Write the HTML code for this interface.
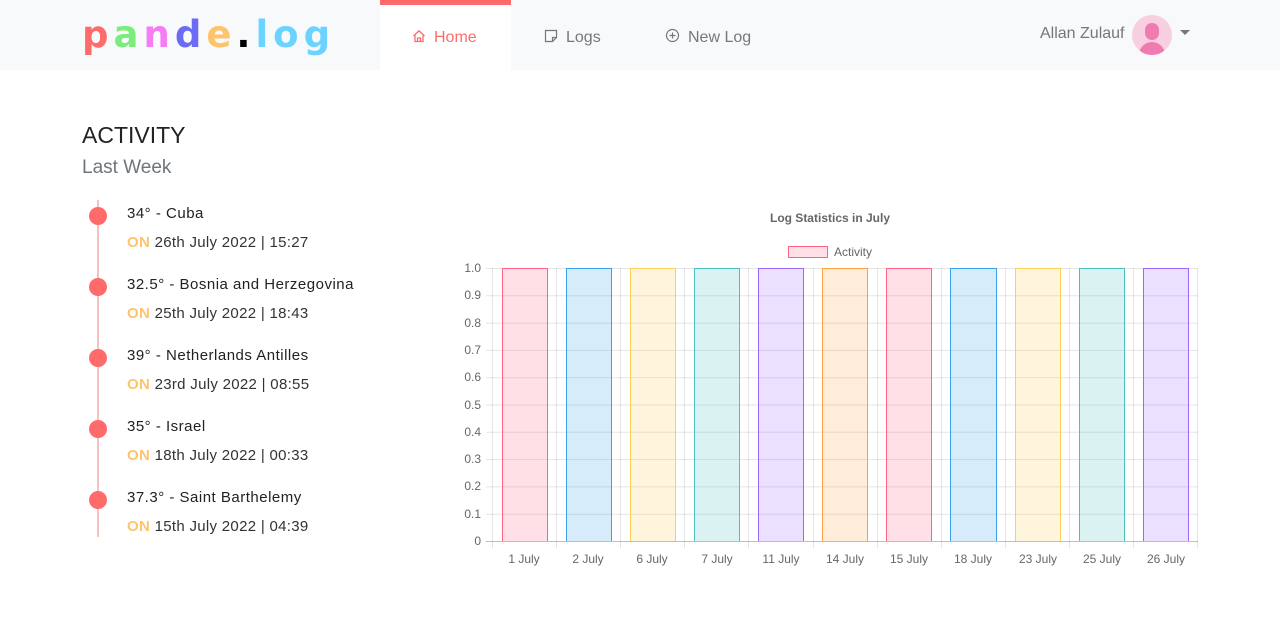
<!DOCTYPE html>
<html><head><meta charset="utf-8"><style>
*{margin:0;padding:0;box-sizing:border-box}
body{width:1280px;height:618px;background:#fff;font-family:"Liberation Sans",sans-serif;position:relative;overflow:hidden}
.nav{position:absolute;left:0;top:0;width:1280px;height:70px;background:#f8f9fb}
.logo{position:absolute;left:82px;top:13px;font-family:"DejaVu Sans",sans-serif;font-weight:bold;font-size:37px;letter-spacing:5px}
.tab{position:absolute;top:0;height:70px;font-size:16px;color:#777;line-height:76px}
.home{left:380px;width:131px;background:#fff;border-top:5px solid #ff6b6b;color:#ff6b6b;line-height:66px;padding-left:32px}
.user{position:absolute;left:1040px;top:25px;font-size:16px;color:#777}
.av{position:absolute;left:1132px;top:15px;width:40px;height:40px;border-radius:50%;background:#f8cfe0;overflow:hidden}
.h1{position:absolute;left:82px;top:122px;font-size:23px;color:#222}
.h2{position:absolute;left:82px;top:157px;font-size:19px;color:#6c757d}
.line{position:absolute;left:97px;top:200px;width:2px;height:337px;background:#f4c0c0}
.dot{position:absolute;left:89px;width:18px;height:18px;border-radius:50%;background:#ff6b6b}
.t{position:absolute;left:127px;font-size:15px;color:#222;letter-spacing:.5px}
.d{position:absolute;left:127px;font-size:15px;color:#333;letter-spacing:.3px}
.d b{color:#ffc46b}
</style></head><body>
<div class="nav">
<div class="logo"><span style="color:#ff6b6b">p</span><span style="color:#7bed7b">a</span><span style="color:#f57cf5">n</span><span style="color:#6b6bf5">d</span><span style="color:#ffc46b">e</span><span style="color:#000">.</span><span style="color:#6bd3ff">log</span></div>
<div class="tab home"><svg width="14" height="14" viewBox="0 0 14 14" style="vertical-align:-1px;margin-right:8px"><path d="M1.5 7L7 1.8 12.5 7M3 5.8V12.5H11V5.8M5.5 12.5V9H8.5V12.5" fill="none" stroke="#ff6b6b" stroke-width="1.3"/></svg>Home</div>
<div class="tab" style="left:544px"><svg width="14" height="14" viewBox="0 0 14 14" style="vertical-align:-1px;margin-right:8px"><path d="M1.5 1.5H12.5V8.5L8.5 12.5H1.5ZM12.5 8.5H8.5V12.5" fill="none" stroke="#777" stroke-width="1.2"/></svg>Logs</div>
<div class="tab" style="left:665px"><svg width="15" height="15" viewBox="0 0 15 15" style="vertical-align:-1px;margin-right:8px"><circle cx="7.5" cy="7.5" r="6" fill="none" stroke="#777" stroke-width="1.2"/><path d="M7.5 4.5V10.5M4.5 7.5H10.5" stroke="#777" stroke-width="1.2"/></svg>New Log</div>
<div class="user">Allan Zulauf</div>
<div class="av"><div style="position:absolute;left:13px;top:8px;width:14px;height:17px;border-radius:7px;background:#ef7bb0"></div><div style="position:absolute;left:7px;top:27px;width:26px;height:20px;border-radius:13px 13px 0 0;background:#ef7bb0"></div></div>
<div style="position:absolute;left:1180px;top:30px;border-left:5px solid transparent;border-right:5px solid transparent;border-top:5px solid #777"></div>
</div>
<div class="h1">ACTIVITY</div>
<div class="h2">Last Week</div>
<div class="line"></div>
<div class="dot" style="top:207px"></div><div class="t" style="top:205px">34° - Cuba</div><div class="d" style="top:234px"><b>ON</b> 26th July 2022 | 15:27</div>
<div class="dot" style="top:278px"></div><div class="t" style="top:276px">32.5° - Bosnia and Herzegovina</div><div class="d" style="top:305px"><b>ON</b> 25th July 2022 | 18:43</div>
<div class="dot" style="top:349px"></div><div class="t" style="top:347px">39° - Netherlands Antilles</div><div class="d" style="top:376px"><b>ON</b> 23rd July 2022 | 08:55</div>
<div class="dot" style="top:420px"></div><div class="t" style="top:418px">35° - Israel</div><div class="d" style="top:447px"><b>ON</b> 18th July 2022 | 00:33</div>
<div class="dot" style="top:491px"></div><div class="t" style="top:489px">37.3° - Saint Barthelemy</div><div class="d" style="top:518px"><b>ON</b> 15th July 2022 | 04:39</div>
<svg style="position:absolute;left:0;top:0" width="1280" height="618" font-family="Liberation Sans,sans-serif" font-size="12" fill="#666">
<text x="830" y="222" text-anchor="middle" font-weight="bold" font-size="12">Log Statistics in July</text>
<rect x="788.5" y="246.5" width="39" height="11" fill="rgba(255,99,132,0.2)" stroke="rgb(255,99,132)"/>
<text x="834" y="256">Activity</text>
<g stroke="rgba(0,0,0,0.1)" stroke-width="1">
<path d="M486 268.5H1198M486 295.8H1198M486 323.1H1198M486 350.4H1198M486 377.7H1198M486 405H1198M486 432.3H1198M486 459.6H1198M486 486.9H1198M486 514.2H1198"/>
<path d="M492.5 268V548M556.5 268V548M620.5 268V548M684.5 268V548M748.5 268V548M813.5 268V548M877.5 268V548M941.5 268V548M1005.5 268V548M1069.5 268V548M1133.5 268V548M1197.5 268V548"/>
</g>
<path d="M486 541.5H1198" stroke="rgba(0,0,0,0.25)"/>
<g stroke-width="1">
<path d="M502.5 541V268.5H547.5V541" fill="rgba(255,99,132,0.2)" stroke="rgb(255,99,132)"/>
<path d="M566.5 541V268.5H611.5V541" fill="rgba(54,162,235,0.2)" stroke="rgb(54,162,235)"/>
<path d="M630.5 541V268.5H675.5V541" fill="rgba(255,206,86,0.2)" stroke="rgb(255,206,86)"/>
<path d="M694.5 541V268.5H739.5V541" fill="rgba(75,192,192,0.2)" stroke="rgb(75,192,192)"/>
<path d="M758.5 541V268.5H803.5V541" fill="rgba(153,102,255,0.2)" stroke="rgb(153,102,255)"/>
<path d="M822.5 541V268.5H867.5V541" fill="rgba(255,159,64,0.2)" stroke="rgb(255,159,64)"/>
<path d="M886.5 541V268.5H931.5V541" fill="rgba(255,99,132,0.2)" stroke="rgb(255,99,132)"/>
<path d="M950.5 541V268.5H996.5V541" fill="rgba(54,162,235,0.2)" stroke="rgb(54,162,235)"/>
<path d="M1015.5 541V268.5H1060.5V541" fill="rgba(255,206,86,0.2)" stroke="rgb(255,206,86)"/>
<path d="M1079.5 541V268.5H1124.5V541" fill="rgba(75,192,192,0.2)" stroke="rgb(75,192,192)"/>
<path d="M1143.5 541V268.5H1188.5V541" fill="rgba(153,102,255,0.2)" stroke="rgb(153,102,255)"/>
</g>
<g text-anchor="end">
<text x="481" y="272">1.0</text><text x="481" y="299">0.9</text><text x="481" y="327">0.8</text><text x="481" y="354">0.7</text><text x="481" y="381">0.6</text><text x="481" y="409">0.5</text><text x="481" y="436">0.4</text><text x="481" y="463">0.3</text><text x="481" y="490">0.2</text><text x="481" y="518">0.1</text><text x="481" y="545">0</text>
</g>
<g text-anchor="middle">
<text x="524" y="563">1 July</text><text x="588" y="563">2 July</text><text x="652" y="563">6 July</text><text x="717" y="563">7 July</text><text x="781" y="563">11 July</text><text x="845" y="563">14 July</text><text x="909" y="563">15 July</text><text x="973" y="563">18 July</text><text x="1038" y="563">23 July</text><text x="1102" y="563">25 July</text><text x="1166" y="563">26 July</text>
</g>
</svg>
</body></html>
